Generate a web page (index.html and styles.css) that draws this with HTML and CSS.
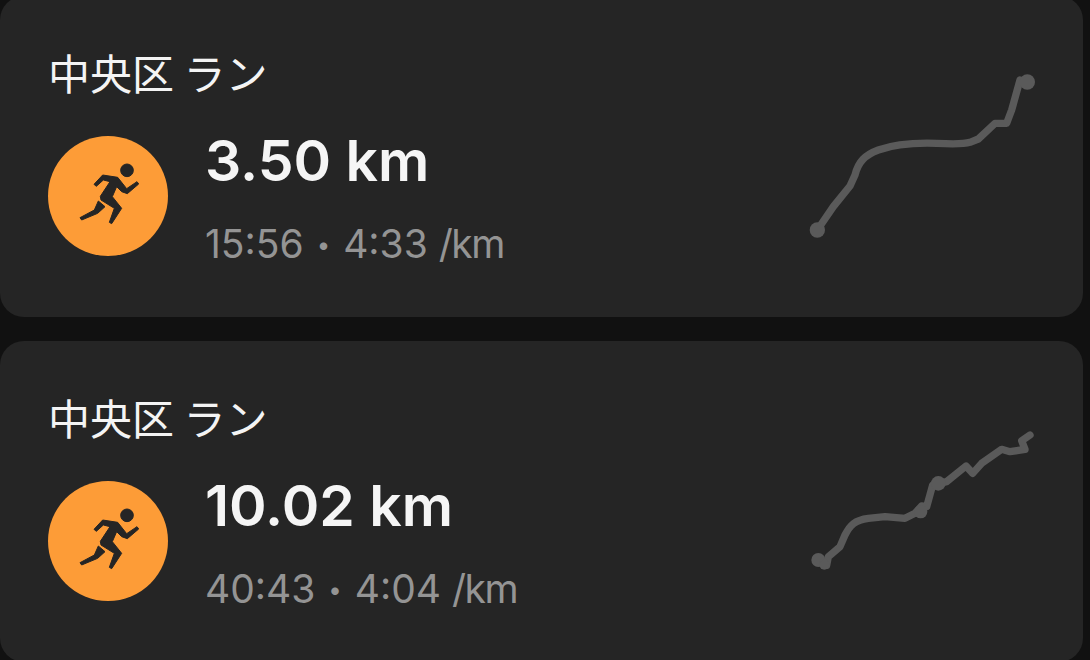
FILE: index.html
```html
<!DOCTYPE html>
<html lang="ja">

<head>
  <meta charset="UTF-8" />
  <meta name="viewport" content="width=device-width, initial-scale=1" />
  <title>ラン</title>
  <link rel="stylesheet" href="styles.css">
</head>

<body>
  <svg class="defs" width="0" height="0">
    <symbol id="runner" viewBox="0 0 210 210">
      <circle cx="156" cy="46" r="19" />
      <path d="M57 88 L83 60 L128 67 L155 101 L186 80 L191 87 L157 116 L140 110 L125 95 L112 125 L140 160 L110 206 L103 202 L118 160 L78 135 L76 124 L105 80 L85 75 L64 94 Z" />
      <path d="M70 138 L90 155 L68 175 L20 195 L15 188 L58 165 Z" />
    </symbol>
  </svg>

  <main class="list">
    <section class="card">
      <h2 class="title">中央区 ラン</h2>
      <div class="badge">
        <svg class="runner"><use href="#runner" /></svg>
      </div>
      <div class="stats">
        <div class="distance">3.50 km</div>
        <div class="pace">15:56 <span class="dot">•</span> 4:33 <span class="unit">/km</span></div>
      </div>
      <svg class="route" viewBox="0 0 780 570">
        <path d="M82 510 L130 440 L180 378 L195 345 C205 305 225 285 265 270 C320 250 380 248 440 250 C480 252 520 253 540 247 L565 237 L615 190 L650 190 L665 150 L690 60" />
        <circle cx="82" cy="510" r="23" />
        <circle cx="712" cy="66" r="23" />
      </svg>
    </section>

    <section class="card">
      <h2 class="title">中央区 ラン</h2>
      <div class="badge">
        <svg class="runner"><use href="#runner" /></svg>
      </div>
      <div class="stats">
        <div class="distance">10.02 km</div>
        <div class="pace">40:43 <span class="dot">•</span> 4:04 <span class="unit">/km</span></div>
      </div>
      <svg class="route" viewBox="0 -45 780 570">
        <path d="M110 436 L115 410 L150 380 L165 345 C180 315 195 300 235 295 L285 290 L345 295 L375 280 L395 258 L410 260 L428 195 L470 185 L528 138 L548 160 L575 130 L635 88 L660 95 L705 88 L695 62 L720 45" />
        <circle cx="85" cy="420" r="21" />
        <circle cx="103" cy="434" r="15" />
        <circle cx="392" cy="275" r="20" />
        <circle cx="445" cy="190" r="22" />
      </svg>
    </section>
  </main>
</body>

</html>
```

FILE: styles.css
```css
html, body {
  height: 100%;
  overflow: hidden;
}

body {
  margin: 0;
  background-color: #111;
  font-family: Inter, "Noto Sans CJK JP", sans-serif;
}

.defs {
  display: block;
}

.list {
  display: flex;
  flex-direction: column;
  gap: 24px;
  width: 1083px;
  margin-top: -4px;
}

.card {
  display: grid;
  grid-template-columns: 120px 1fr 260px;
  grid-template-rows: 140px 181px;
  column-gap: 37px;
  height: 321px;
  padding: 0 33px 0 48px;
  box-sizing: border-box;
  background-color: #252525;
  border-radius: 24px;
}

.title {
  grid-column: 1 / 3;
  margin: 46px 0 0 0;
  font-family: "Noto Sans CJK JP", sans-serif;
  font-size: 42px;
  font-weight: 400;
  line-height: 60px;
  color: #f4f4f4;
}

.badge {
  grid-row: 2;
  display: flex;
  align-items: center;
  justify-content: center;
  width: 120px;
  height: 120px;
  border-radius: 50%;
  background-color: #fd9c37;
}

.runner {
  width: 70px;
  height: 70px;
  fill: #252525;
  stroke: #252525;
  stroke-width: 3;
  stroke-linejoin: round;
  transform: translate(2px, -6px);
}

.stats {
  grid-row: 2;
  margin-top: -10px;
}

.distance {
  font-size: 57px;
  font-weight: 600;
  line-height: 70px;
  color: #f5f5f5;
}

.pace {
  margin-top: 24px;
  font-size: 39px;
  line-height: 48px;
  color: #949494;
}

.dot {
  margin: 0 2px;
  font-size: 24px;
  vertical-align: 5px;
}

.unit {
  letter-spacing: -1.5px;
}

.route {
  grid-column: 3;
  grid-row: 1 / 3;
  width: 260px;
  height: 190px;
  margin-top: 64px;
}

.route path {
  fill: none;
  stroke: #5a5a5a;
  stroke-width: 22;
  stroke-linecap: round;
  stroke-linejoin: round;
}

.route circle {
  fill: #5a5a5a;
}
```
